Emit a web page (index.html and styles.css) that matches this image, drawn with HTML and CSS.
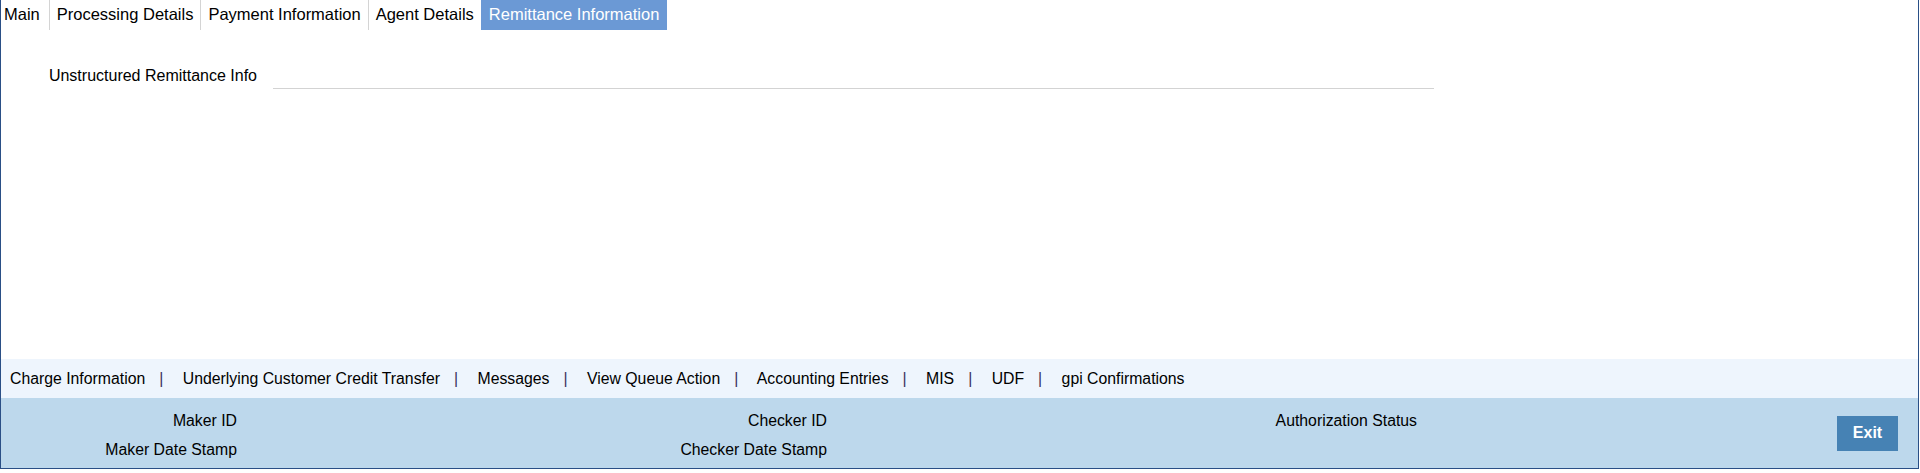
FILE: index.html
```html
<!DOCTYPE html>
<html lang="en">
<head>
  <meta charset="UTF-8">
  <title>Remittance Information</title>
  <link rel="stylesheet" href="styles.css">
</head>
<body>
  <div class="screen">
    <div class="tabs">
      <div class="tab first">Main</div>
      <div class="tab">Processing Details</div>
      <div class="tab">Payment Information</div>
      <div class="tab">Agent Details</div>
      <div class="tab active">Remittance Information</div>
    </div>

    <div class="content">
      <div class="field-row">
        <label class="field-label" for="remitInfo">Unstructured Remittance Info</label>
        <input type="text" id="remitInfo" class="field-input">
      </div>
    </div>

    <div class="sub-links">
      <a>Charge Information</a><span class="sep">|</span>
      <a>Underlying Customer Credit Transfer</a><span class="sep">|</span>
      <a>Messages</a><span class="sep">|</span>
      <a>View Queue Action</a><span class="sep">|</span>
      <a>Accounting Entries</a><span class="sep">|</span>
      <a>MIS</a><span class="sep">|</span>
      <a>UDF</a><span class="sep">|</span>
      <a>gpi Confirmations</a>
    </div>

    <div class="audit">
      <div class="audit-fields">
        <div class="audit-label">Maker ID</div>
        <div class="audit-label">Checker ID</div>
        <div class="audit-label">Authorization Status</div>
        <div class="audit-label">Maker Date Stamp</div>
        <div class="audit-label">Checker Date Stamp</div>
        <div class="audit-label"></div>
      </div>
      <button class="exit-btn">Exit</button>
    </div>
  </div>
</body>
</html>
```

FILE: styles.css
```css
body {
  margin: 0;
  background: #ffffff;
  font-family: 'Liberation Sans', Arial, sans-serif;
  color: #000000;
}
.screen {
  width: 1919px;
  height: 469px;
  box-sizing: border-box;
  border-left: 1px solid #2a4f86;
  border-right: 1px solid #2a4f86;
  border-bottom: 1px solid #2a4f86;
  display: flex;
  flex-direction: column;
}
.tabs {
  display: flex;
  height: 30px;
}
.tab {
  font-size: 16.5px;
  line-height: 28px;
  height: 30px;
  padding: 0 7px;
  border-left: 1px solid #d4d4d4;
  white-space: nowrap;
}
.tab.first {
  border-left: none;
  padding-left: 3px;
  padding-right: 9px;
}
.tab.active {
  background-color: #6b99d5;
  color: #ffffff;
  border-left: none;
  padding: 0 8px;
}
.content {
  flex: 1;
  padding-top: 32px;
}
.field-row {
  display: flex;
  align-items: center;
  height: 27px;
}
.field-label {
  width: 256px;
  text-align: right;
  font-size: 16px;
}
.field-input {
  width: 1161px;
  height: 27px;
  box-sizing: border-box;
  margin-left: 16px;
  border: none;
  border-bottom: 1px solid #d3d3d3;
  outline: none;
  background: transparent;
}
.sub-links {
  height: 39px;
  line-height: 39px;
  background-color: #eef5fd;
  font-size: 15.8px;
  padding-left: 9px;
  white-space: nowrap;
}
.sub-links .sep {
  margin: 0 15px 0 14px;
  color: #3a2f5a;
}
.audit {
  height: 70px;
  background-color: #bdd8ec;
  display: flex;
  align-items: center;
}
.audit-fields {
  display: grid;
  grid-template-columns: 590px 590px 590px;
  grid-auto-rows: 29px;
  align-self: flex-start;
  padding-top: 8px;
}
.audit-label {
  width: 236px;
  text-align: right;
  font-size: 15.8px;
  line-height: 29px;
}
.exit-btn {
  margin-left: auto;
  margin-right: 20px;
  width: 61px;
  height: 35px;
  border: none;
  background-color: #4682b4;
  color: #ffffff;
  font-family: 'Liberation Sans', Arial, sans-serif;
  font-weight: bold;
  font-size: 16px;
  padding: 0;
}
```
